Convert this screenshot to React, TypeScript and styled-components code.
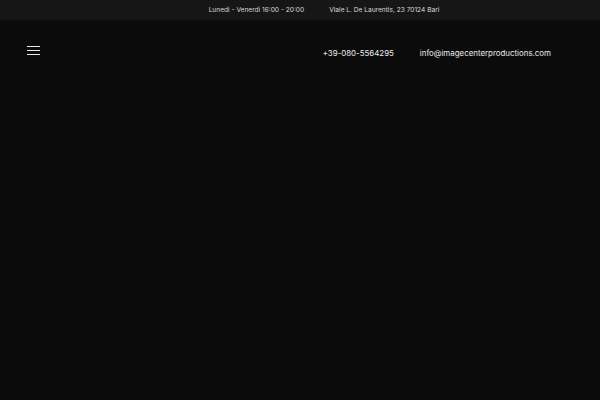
import React from "react";
import styled, { createGlobalStyle } from "styled-components";

const Global = createGlobalStyle`
  html, body {
    margin: 0;
    padding: 0;
    background: #0b0b0b;
  }
  body {
    font-family: "Inter", "Liberation Sans", sans-serif;
  }
`;

const Page = styled.div`
  width: 600px;
  height: 400px;
  background: #0b0b0b;
  overflow: hidden;
`;

const TopBar = styled.div`
  height: 20px;
  background: #161616;
  display: flex;
  align-items: center;
  justify-content: center;
  gap: 25px;
  padding-left: 48px;
`;

const TopItem = styled.span`
  color: #dadada;
  font-size: 6.6px;
  white-space: nowrap;
`;

const Header = styled.header`
  display: flex;
  align-items: center;
  justify-content: space-between;
  padding: 0 49px 0 27px;
  height: 64px;
`;

const Burger = styled.button`
  display: flex;
  flex-direction: column;
  gap: 2.6px;
  width: 13px;
  padding: 0;
  background: none;
  border: 0;
  margin-top: -3px;
  cursor: pointer;
`;

const Line = styled.span`
  display: block;
  height: 1.4px;
  background: #e8e8e8;
`;

const Contacts = styled.nav`
  display: flex;
  gap: 26px;
  padding-top: 2px;
`;

const Contact = styled.a`
  color: #ececec;
  font-size: 7.9px;
  text-decoration: none;
  white-space: nowrap;
`;

export default function App() {
  return (
    <Page>
      <Global />
      <TopBar>
        <TopItem>Lunedì - Venerdì 16:00 - 20:00</TopItem>
        <TopItem>Viale L. De Laurentis, 23 70124 Bari</TopItem>
      </TopBar>
      <Header>
        <Burger aria-label="menu">
          <Line />
          <Line />
          <Line />
        </Burger>
        <Contacts>
          <Contact href="#">+39-080-5564295</Contact>
          <Contact href="#">info@imagecenterproductions.com</Contact>
        </Contacts>
      </Header>
    </Page>
  );
}
